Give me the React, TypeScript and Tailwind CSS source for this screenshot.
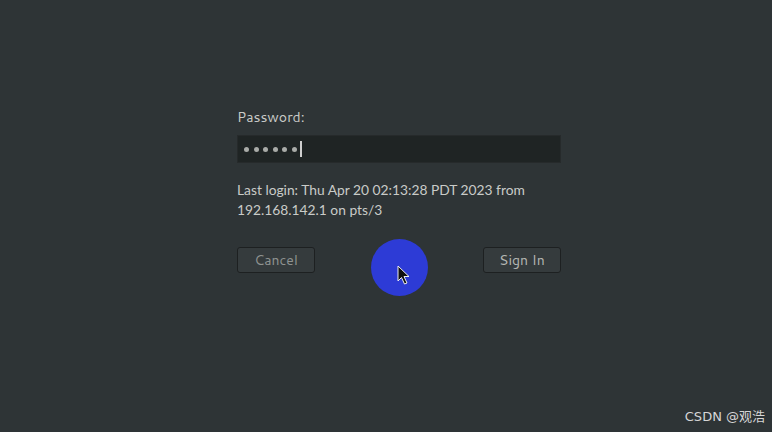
const font = { fontFamily: "Cantarell, Lato, 'Noto Sans', sans-serif" }

const Cursor = () => (
  <svg width="14" height="21" viewBox="0 0 14 21" className="absolute left-[26px] top-[26px]">
    <path d="M1 1 L1 16 L4.5 12.5 L7.5 19 L10 18 L7 11.5 L12 11.5 Z" fill="#111" stroke="#eee" strokeWidth="1" strokeLinejoin="round" />
  </svg>
)

export default function App() {
  return (
    <main className="w-[772px] h-[432px] bg-[#2e3436] relative overflow-hidden text-[#d0d2cf]" style={font}>
      <div className="pl-[237px] pt-[107px] w-[561px]">
        <p className="text-[14px] leading-[20px] text-[#c9cbc8]">Password:</p>
        <div className="mt-[8px] h-[28px] w-[324px] bg-[#1f2424] border border-[#262a2b] flex items-center pl-[6px] gap-[4.6px]">
          {[0, 1, 2, 3, 4, 5].map((i) => (
            <span key={i} className="w-[5px] h-[5px] rounded-full bg-[#a9aba8]" />
          ))}
          <span className="ml-[-2px] w-[2px] h-[16px] bg-[#cfcfcf]" />
        </div>
        <p className="mt-[17px] text-[13.8px] leading-[20px] text-[#c9cbc8] font-[Lato,sans-serif]">
          Last login: Thu Apr 20 02:13:28 PDT 2023 from
          <br />
          192.168.142.1 on pts/3
        </p>
        <div className="mt-[27px] flex justify-between w-[324px]">
          <button className="w-[78px] h-[26px] bg-[#353b3d] border border-[#1d2021] rounded-[3px] text-[14px] text-[#8f9391]">
            Cancel
          </button>
          <button className="w-[78px] h-[26px] bg-[#353b3d] border border-[#1d2021] rounded-[3px] text-[14px] text-[#b4b6b3]">
            Sign In
          </button>
        </div>
      </div>
      <div className="absolute left-[371px] top-[239px] w-[57px] h-[57px] rounded-full bg-[#2d3bd6]">
        <Cursor />
      </div>
      <p className="absolute right-[7px] bottom-[6px] text-[13px] text-[#d6d6d6]" style={{ fontFamily: "'DejaVu Sans', 'Noto Sans CJK SC', sans-serif" }}>
        CSDN @观浩
      </p>
    </main>
  )
}
